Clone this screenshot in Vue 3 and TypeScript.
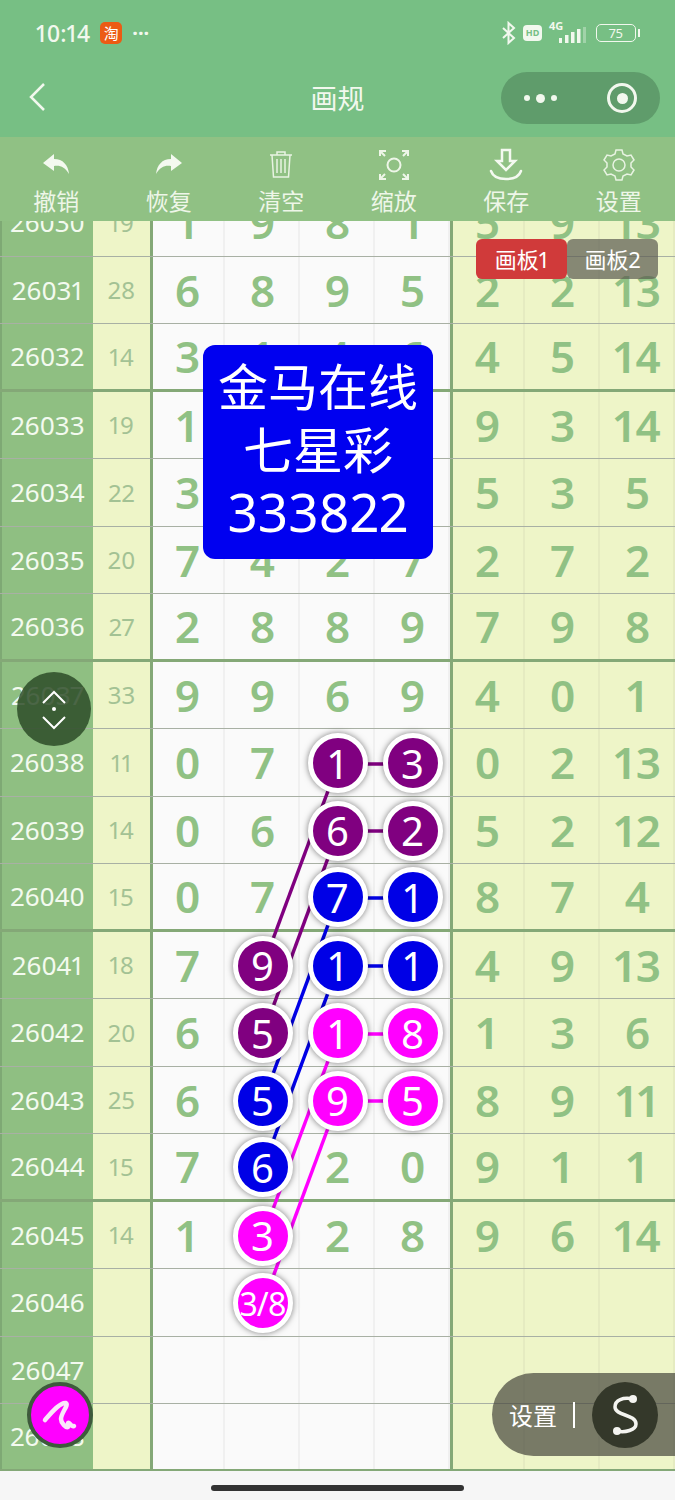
<template>
  <div class="page">
    <header class="top">
      <div class="status">
        <div class="status-left">
          <span class="time">10:14</span>
          <span class="tb">淘</span>
          <span class="more">···</span>
        </div>
        <div class="status-right">
          <svg width="16" height="24" viewBox="0 0 16 24" class="bt"><path d="M2 7l11 10-5.500 5V2l5.500 5L2 17" fill="none" stroke="#f2f8ee" stroke-width="2"/></svg>
          <span class="hd">HD</span>
          <svg width="42" height="26" viewBox="0 0 42 26"><text x="1" y="10" class="net">4G</text><rect x="11" y="18" width="3" height="5" fill="#f2f8ee"/><rect x="17" y="15" width="3.500" height="8" fill="#f2f8ee"/><rect x="23" y="12" width="3.500" height="11" fill="#f2f8ee"/><rect x="29" y="9" width="3.500" height="14" fill="#f2f8ee"/><rect x="35" y="7" width="3" height="16" fill="#f2f8ee" opacity=".35"/></svg>
          <span class="batt"><span class="batt-num">75</span></span>
          <span class="batt-tip"></span>
        </div>
      </div>
      <div class="nav">
        <svg class="back" width="22" height="32" viewBox="0 0 22 32"><path d="M18 3L5 16l13 13" fill="none" stroke="#f2f8ee" stroke-width="2.500"/></svg>
        <span class="title">画规</span>
        <div class="capsule">
          <span class="dots"><i></i><i class="big"></i><i></i></span>
          <span class="target"><i></i></span>
        </div>
      </div>
    </header>

    <nav class="tools">
      <div v-for="t in tools" :key="t.label" class="tool">
        <svg width="36" height="36" viewBox="0 0 36 36" v-html="t.icon"></svg>
        <span>{{ t.label }}</span>
      </div>
    </nav>

    <main class="board">
      <div class="table">
        <div v-for="(r, i) in rows" :key="r.no" class="row" :class="{ thick: r.no % 4 === 0 }">
          <div class="no">{{ r.no }}</div>
          <div class="sum">{{ r.sum }}</div>
          <div class="mid">
            <div v-for="(c, j) in r.mid" :key="j" class="cell">
              <span v-if="ballColor(i, j)" class="ball" :class="[ballColor(i, j), { small: String(c).length > 1 }]">{{ c }}</span>
              <template v-else>{{ c }}</template>
            </div>
          </div>
          <div class="right">
            <div v-for="(c, j) in r.right" :key="j" class="cell">{{ c }}</div>
          </div>
        </div>
      </div>

      <svg class="lines" width="675" height="1250" viewBox="0 221 675 1250">
        <line v-for="(l, i) in lines" :key="i" :x1="l[0]" :y1="l[1]" :x2="l[2]" :y2="l[3]" :stroke="l[4]" stroke-width="3.500" />
      </svg>

      <div class="tabs">
        <span class="tab on">画板1</span>
        <span class="tab">画板2</span>
      </div>
      <div class="notice">金马在线<br />七星彩<br /><span class="code">333822</span></div>
      <div class="updown">
        <svg width="36" height="50" viewBox="0 0 36 50"><path d="M7 19L18 8l11 11M7 33l11 11 11-11" fill="none" stroke="#fff" stroke-width="2"/><circle cx="18" cy="25" r="2" fill="#fff"/></svg>
      </div>
      <div class="pen">
        <svg width="44" height="44" viewBox="0 0 44 44"><path d="M7 27C13 20 22 9 28 10c3 2-5 10-5 16 0 4 5 9 7 8 1-2-1-5 1-4 2 1 2 4 5 3" fill="none" stroke="#fbe6fb" stroke-width="4.500" stroke-linecap="round" stroke-linejoin="round"/></svg>
      </div>
      <div class="setting">
        <span class="set-text">设置</span>
        <span class="set-bar"></span>
        <span class="set-s">
          <svg width="40" height="46" viewBox="0 0 40 46"><path d="M28 7C18 5 10 8 10 15c0 9 21 7 21 17 0 6-11 9-19 7" fill="none" stroke="#f4f4f0" stroke-width="3.500"/><circle cx="28" cy="7" r="4" fill="#f4f4f0"/><circle cx="12" cy="39" r="4" fill="#f4f4f0"/></svg>
        </span>
      </div>
    </main>

    <footer class="home"><span></span></footer>
  </div>
</template>

<script setup lang="ts">
interface Row {
  no: number
  sum: number | string
  mid: (number | string)[]
  right: (number | string)[]
}

const undo = '<path d="M16 7L5 16l11 8v-5c6-1 11 1 15 8-1-9-6-15-15-15z" fill="#f4f9f0"/>'
const redo = '<path d="M20 7l11 9-11 8v-5c-6-1-11 1-15 8 1-9 6-15 15-15z" fill="#f4f9f0"/>'
const trash = '<g fill="none" stroke="#e8f3e2" stroke-width="1.500"><path d="M7 8h22M14 8V5h8v3M9 8l1.500 22h15L27 8M14 12v14M18 12v14M22 12v14"/></g>'
const zoomIcon = '<g fill="none" stroke="#eef6e8" stroke-width="2"><circle cx="18" cy="18" r="6.500"/><path d="M4 9V4h6M4 4l5 5M32 9V4h-6M32 4l-5 5M4 27v5h6M4 32l5-5M32 27v5h-6M32 32l-5-5"/></g>'
const save = '<g fill="none" stroke="#f4f9f0" stroke-width="2.500"><path d="M14 3h8v11h5l-9 9-9-9h5z"/><path d="M3 24c2 6 8 8 15 8s13-2 15-8" stroke-linecap="round"/></g>'
const gear = '<g fill="none" stroke="#e8f3e2" stroke-width="1.500"><circle cx="18" cy="18" r="6"/><path d="M15 3h6l1 4 4 2 4-1 3 5-3 3v4l3 3-3 5-4-1-4 2-1 4h-6l-1-4-4-2-4 1-3-5 3-3v-4l-3-3 3-5 4 1 4-2z"/></g>'

const tools = [
  { label: '撤销', icon: undo },
  { label: '恢复', icon: redo },
  { label: '清空', icon: trash },
  { label: '缩放', icon: zoomIcon },
  { label: '保存', icon: save },
  { label: '设置', icon: gear },
]

const rows: Row[] = [
  { no: 26030, sum: 19, mid: [1, 9, 8, 1], right: [5, 9, 13] },
  { no: 26031, sum: 28, mid: [6, 8, 9, 5], right: [2, 2, 13] },
  { no: 26032, sum: 14, mid: [3, 1, 4, 6], right: [4, 5, 14] },
  { no: 26033, sum: 19, mid: [1, 6, 7, 5], right: [9, 3, 14] },
  { no: 26034, sum: 22, mid: [3, 9, 3, 7], right: [5, 3, 5] },
  { no: 26035, sum: 20, mid: [7, 4, 2, 7], right: [2, 7, 2] },
  { no: 26036, sum: 27, mid: [2, 8, 8, 9], right: [7, 9, 8] },
  { no: 26037, sum: 33, mid: [9, 9, 6, 9], right: [4, 0, 1] },
  { no: 26038, sum: 11, mid: [0, 7, 1, 3], right: [0, 2, 13] },
  { no: 26039, sum: 14, mid: [0, 6, 6, 2], right: [5, 2, 12] },
  { no: 26040, sum: 15, mid: [0, 7, 7, 1], right: [8, 7, 4] },
  { no: 26041, sum: 18, mid: [7, 9, 1, 1], right: [4, 9, 13] },
  { no: 26042, sum: 20, mid: [6, 5, 1, 8], right: [1, 3, 6] },
  { no: 26043, sum: 25, mid: [6, 5, 9, 5], right: [8, 9, 11] },
  { no: 26044, sum: 15, mid: [7, 6, 2, 0], right: [9, 1, 1] },
  { no: 26045, sum: 14, mid: [1, 3, 2, 8], right: [9, 6, 14] },
  { no: 26046, sum: '', mid: ['', '3/8', '', ''], right: ['', '', ''] },
  { no: 26047, sum: '', mid: ['', '', '', ''], right: ['', '', ''] },
  { no: 26048, sum: '', mid: ['', '', '', ''], right: ['', '', ''] },
]

// 行下标 -> 列下标 -> 颜色
const balls: Record<number, Record<number, string>> = {
  8: { 2: 'purple', 3: 'purple' },
  9: { 2: 'purple', 3: 'purple' },
  10: { 2: 'blue', 3: 'blue' },
  11: { 1: 'purple', 2: 'blue', 3: 'blue' },
  12: { 1: 'purple', 2: 'pink', 3: 'pink' },
  13: { 1: 'blue', 2: 'pink', 3: 'pink' },
  14: { 1: 'blue' },
  15: { 1: 'pink' },
  16: { 1: 'pink' },
}

const ballColor = (row: number, col: number) => balls[row]?.[col] ?? ''

const purple = '#800080'
const blue = '#0000e6'
const pink = '#ff00ff'

const lines: [number, number, number, number, string][] = [
  [338, 764, 413, 764, purple],
  [338, 831, 413, 831, purple],
  [338, 898, 413, 898, blue],
  [338, 966, 413, 966, blue],
  [338, 1034, 413, 1034, pink],
  [338, 1101, 413, 1101, pink],
  [338, 764, 263, 966, purple],
  [338, 831, 263, 1034, purple],
  [338, 898, 263, 1101, blue],
  [338, 966, 263, 1168, blue],
  [338, 1034, 263, 1236, pink],
  [338, 1101, 263, 1304, pink],
]
</script>

<style scoped>
.page {
  width: 675px;
  height: 1500px;
  overflow: hidden;
  display: flex;
  flex-direction: column;
  font-family: "Noto Sans", "Noto Sans CJK SC", sans-serif;
  font-variant-numeric: proportional-nums;
}

.top {
  height: 137px;
  background: #77bf84;
  color: #f2f8ee;
}

.status {
  height: 66px;
  display: flex;
  justify-content: space-between;
  align-items: center;
  padding: 0 35px 0 36px;
}

.status-left,
.status-right {
  display: flex;
  align-items: center;
}

.time {
  font-size: 23px;
  font-weight: 500;
}

.tb {
  width: 22px;
  height: 22px;
  margin-left: 10px;
  border-radius: 5px;
  background: #ec5b14;
  color: #fff;
  font-size: 15px;
  line-height: 22px;
  text-align: center;
}

.more {
  margin-left: 10px;
  font-size: 20px;
  font-weight: 700;
  line-height: 20px;
}

.status-right {
  gap: 6px;
}

.hd {
  width: 19px;
  height: 16px;
  border-radius: 4px;
  background: #f2f8ee;
  color: #77bf84;
  font-size: 9px;
  font-weight: 700;
  line-height: 16px;
  text-align: center;
}

.net {
  font: 700 11px "Noto Sans", sans-serif;
  fill: #f2f8ee;
}

.batt {
  width: 38px;
  height: 16px;
  border: 1.500px solid #f2f8ee;
  border-radius: 5px;
  display: flex;
  align-items: center;
  justify-content: center;
}

.batt-num {
  font-size: 13px;
  line-height: 14px;
}

.batt-tip {
  width: 2px;
  height: 8px;
  margin-left: -4px;
  background: #f2f8ee;
}

.nav {
  height: 71px;
  box-sizing: border-box;
  padding-bottom: 9px;
  position: relative;
  display: flex;
  align-items: center;
  justify-content: center;
}

.back {
  position: absolute;
  left: 26px;
  top: 15px;
}

.title {
  font-size: 27px;
}

.capsule {
  position: absolute;
  right: 15px;
  top: 6px;
  width: 159px;
  height: 52px;
  border-radius: 26px;
  background: #5f9c6b;
  display: flex;
  align-items: center;
  justify-content: space-between;
  padding: 0 23px 0 23px;
  box-sizing: border-box;
}

.dots {
  display: flex;
  align-items: center;
  gap: 6px;
}

.dots i {
  width: 6px;
  height: 6px;
  border-radius: 50%;
  background: #f2f8ee;
}

.dots i.big {
  width: 9px;
  height: 9px;
}

.target {
  width: 30px;
  height: 30px;
  box-sizing: border-box;
  border: 3px solid #f2f8ee;
  border-radius: 50%;
  display: flex;
  align-items: center;
  justify-content: center;
}

.target i {
  width: 11px;
  height: 11px;
  border-radius: 50%;
  background: #f2f8ee;
}

.tools {
  height: 84px;
  background: #90c184;
  display: grid;
  grid-template-columns: repeat(6, 112.500px);
}

.tool {
  display: flex;
  flex-direction: column;
  align-items: center;
  padding-top: 10px;
  color: #eef6e8;
  font-size: 23px;
  line-height: 32px;
}

.tool svg {
  margin-bottom: 2px;
}

.board {
  position: relative;
  height: 1250px;
  overflow: hidden;
  background: #fff;
}

.table {
  margin-top: -32px;
}

.row {
  height: 67.500px;
  box-sizing: border-box;
  display: flex;
  border-bottom: 1.500px solid #a8b0a4;
  color: #90c184;
}

.row.thick {
  border-bottom: 3px solid #84a877;
}

.no {
  width: 93px;
  box-sizing: border-box;
  border-left: 2px solid #7ea974;
  background: #8fbf82;
  color: #f3faef;
  font-size: 26px;
  display: flex;
  align-items: center;
  justify-content: center;
}

.sum {
  width: 57px;
  background: #eef5c8;
  color: #a3c294;
  font-size: 24px;
  display: flex;
  align-items: center;
  justify-content: center;
}

.mid,
.right {
  display: grid;
  grid-template-columns: repeat(auto-fill, 75px);
  box-shadow: inset 3px 0 0 #84a877;
  font-size: 44px;
  font-weight: 560;
}

.mid {
  width: 300px;
  background: #fafafa;
}

.right {
  width: 225px;
  background: #eef5c8;
}

.cell {
  display: flex;
  align-items: center;
  justify-content: center;
  box-shadow: inset -2px 0 0 rgba(120, 120, 120, 0.07);
}

.ball {
  position: relative;
  z-index: 2;
  width: 50px;
  height: 50px;
  flex: none;
  margin-top: 2px;
  border: 5px solid #fff;
  border-radius: 50%;
  box-shadow: 0 0 6px rgba(0, 0, 0, 0.5);
  display: flex;
  align-items: center;
  justify-content: center;
  color: #fff;
  font-weight: 400;
  font-size: 40px;
}

.ball.small {
  font-size: 32px;
  letter-spacing: -1px;
  white-space: nowrap;
}

.ball.purple {
  background: #800080;
}

.ball.blue {
  background: #0000e6;
}

.ball.pink {
  background: #ff00ff;
}

.lines {
  position: absolute;
  left: 0;
  top: 0;
  z-index: 1;
}

.tabs {
  position: absolute;
  z-index: 3;
  left: 476px;
  top: 18px;
  display: flex;
}

.tab {
  width: 91px;
  height: 40px;
  border-radius: 6px;
  background: rgba(90, 90, 80, 0.7);
  color: #fff;
  font-size: 22px;
  line-height: 40px;
  text-align: center;
}

.tab.on {
  background: #d03a3a;
}

.notice {
  position: absolute;
  z-index: 3;
  left: 203px;
  top: 124px;
  width: 230px;
  height: 214px;
  border-radius: 12px;
  background: #0000f0;
  color: #fff;
  font-size: 50px;
  line-height: 63px;
  text-align: center;
  padding-top: 11px;
  box-sizing: border-box;
}

.code {
  font-size: 53px;
  line-height: 60px;
}

.updown {
  position: absolute;
  z-index: 3;
  left: 17px;
  top: 451px;
  width: 74px;
  height: 74px;
  border-radius: 50%;
  background: rgba(45, 75, 40, 0.85);
  display: flex;
  align-items: center;
  justify-content: center;
}

.pen {
  position: absolute;
  z-index: 3;
  left: 27px;
  top: 1161px;
  width: 66px;
  height: 66px;
  box-sizing: border-box;
  border: 4px solid #3e5a3c;
  border-radius: 50%;
  background: #ff00ff;
  display: flex;
  align-items: center;
  justify-content: center;
}

.setting {
  position: absolute;
  z-index: 3;
  right: 0;
  top: 1152px;
  width: 183px;
  height: 83px;
  box-sizing: border-box;
  border-radius: 42px 0 0 42px;
  background: rgba(70, 70, 60, 0.7);
  display: flex;
  align-items: center;
  padding-left: 17px;
}

.set-text {
  color: #fff;
  font-size: 24px;
}

.set-bar {
  width: 2px;
  height: 26px;
  margin-left: 16px;
  background: #fff;
}

.set-s {
  width: 66px;
  height: 66px;
  margin-left: 17px;
  border-radius: 50%;
  background: #34382a;
  display: flex;
  align-items: center;
  justify-content: center;
}

.home {
  flex: 1;
  background: #f6f6f6;
  display: flex;
  justify-content: center;
  padding-top: 14px;
  box-sizing: border-box;
}

.home span {
  width: 253px;
  height: 6px;
  border-radius: 3px;
  background: #333;
}
</style>
